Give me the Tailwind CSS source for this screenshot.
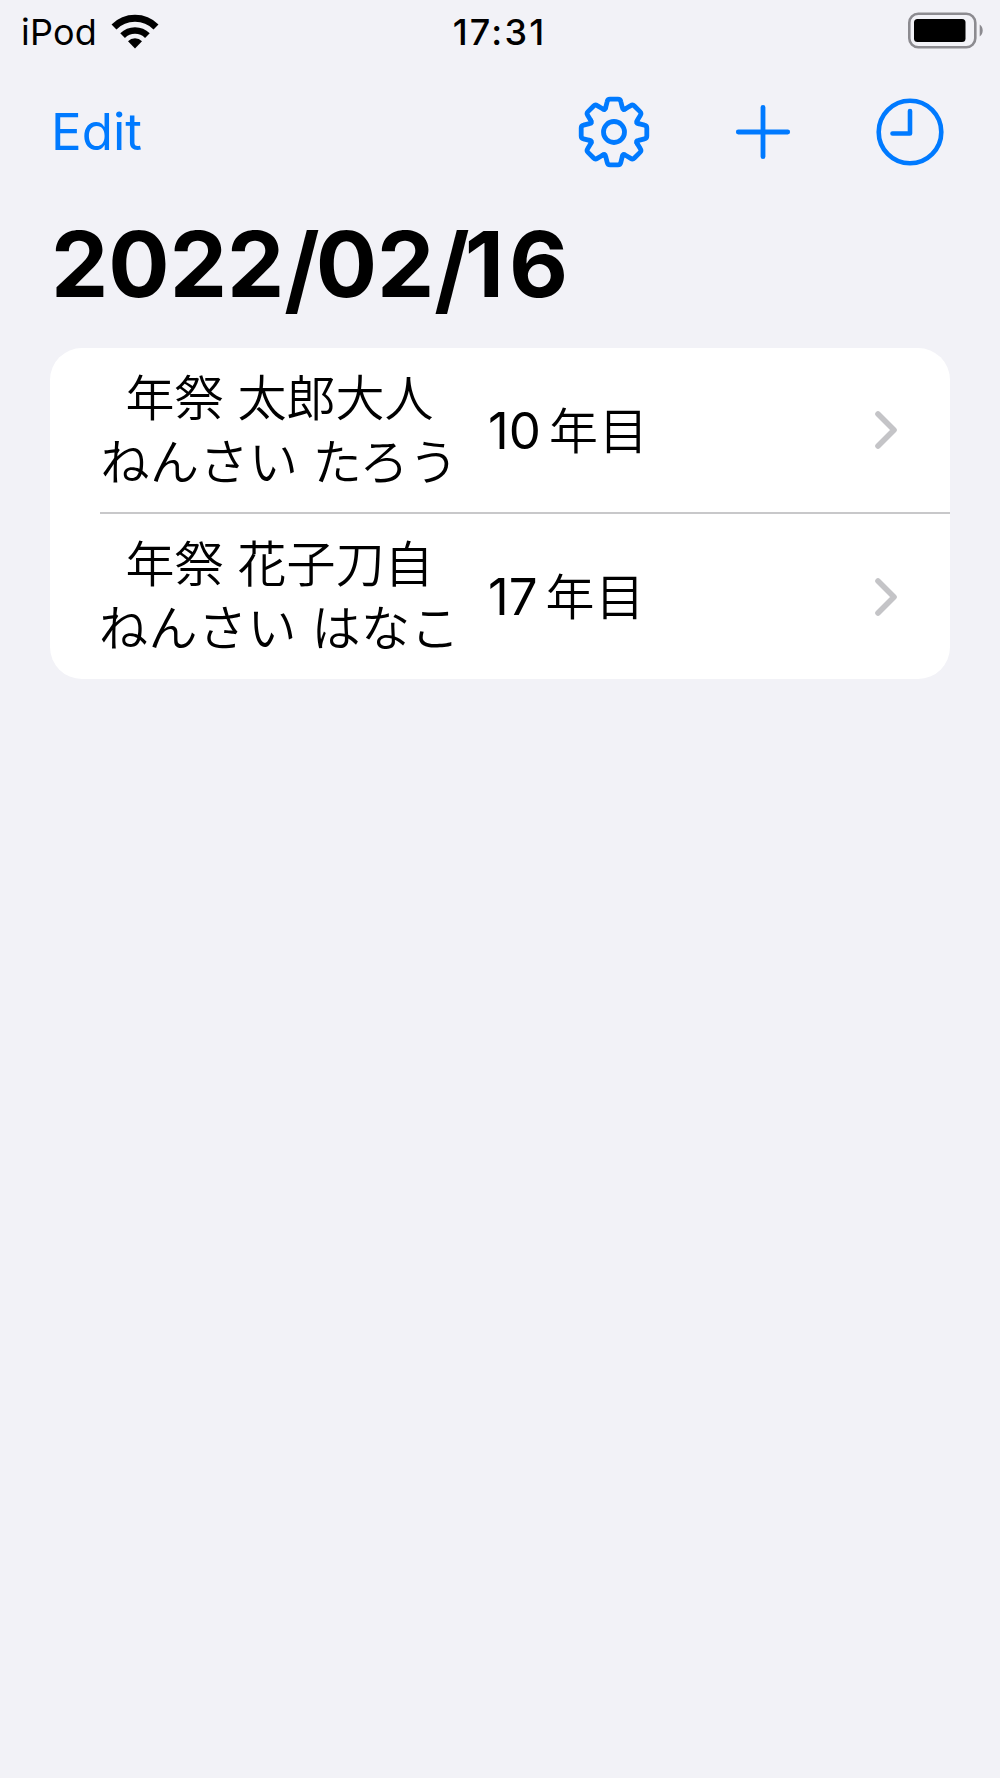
<!DOCTYPE html>
<html lang="ja">
<head>
    <meta charset="UTF-8">
    <meta name="viewport" content="width=device-width, initial-scale=1.0">
    <title>2022/02/16</title>
    <script src="https://cdn.jsdelivr.net/npm/@tailwindcss/browser@4"></script>
</head>
<body class="bg-[#f2f2f7] text-black min-h-screen font-['Inter','Noto_Sans_CJK_JP',sans-serif]">
    <!-- status bar -->
    <div class="grid grid-cols-3 items-center h-[64px] pl-[21px] pr-[17px]">
        <div class="flex items-center">
            <span class="w-[77px] text-[36px] leading-[64px] tracking-[0.2px] font-normal">iPod</span>
            <svg class="w-[48px] h-[36px] ml-[13px] mb-[2px]" viewBox="111 13 48 36" fill="none" stroke="#000">
                <path d="M114 27a29.7 29.7 0 0 1 42 0" stroke-width="7"/>
                <path d="M122.6 35.6a17.5 17.5 0 0 1 24.8 0" stroke-width="6.6"/>
                <path d="M128 41.2a10 10 0 0 1 14 0l-7 7.2z" fill="#000" stroke="none"/>
            </svg>
        </div>
        <div class="pr-[5px] text-center text-[36px] leading-[64px] tracking-[2.2px] font-medium">17:31</div>
        <svg class="w-[76px] h-[37px] justify-self-end mb-[4px]" viewBox="907 12 76 37" fill="none">
            <rect x="909.3" y="13.8" width="66" height="33.4" rx="9" stroke="#8c8b90" stroke-width="2.6"/>
            <rect x="914" y="19" width="51.5" height="23" rx="3.5" fill="#000"/>
            <path d="M979.7 24.5c4 2.5 4 9.5 0 12z" fill="#8c8b90"/>
        </svg>
    </div>

    <!-- toolbar -->
    <div class="flex items-center justify-between h-[136px] pl-[51px] pr-[55px] text-[#007aff]">
        <button class="text-[51px] leading-[60px] font-normal">Edit</button>
        <div class="flex items-center">
            <svg class="w-[72px] h-[72px]" viewBox="-36 -36 72 72" fill="none" stroke="currentColor" stroke-width="4.8" stroke-linecap="round" stroke-linejoin="round">
                <path id="tooth" d="M-8.3-24.5L-6.8-30.5Q-6.3-32.8-4-32.8H4Q6.3-32.8 6.8-30.5L8.3-24.5Q8.8-21.2 11.5-23.2"/>
                <use href="#tooth" transform="rotate(45)"/>
                <use href="#tooth" transform="rotate(90)"/>
                <use href="#tooth" transform="rotate(135)"/>
                <use href="#tooth" transform="rotate(180)"/>
                <use href="#tooth" transform="rotate(225)"/>
                <use href="#tooth" transform="rotate(270)"/>
                <use href="#tooth" transform="rotate(315)"/>
                <circle r="10.5"/>
            </svg>
            <svg class="w-[60px] h-[60px] ml-[83.5px]" viewBox="-30 -30 60 60" fill="none" stroke="currentColor" stroke-width="4.8" stroke-linecap="round">
                <path d="M-24.7 0H24.7M0-24.7V24.7"/>
            </svg>
            <svg class="w-[70px] h-[70px] ml-[82px]" viewBox="-35 -35 70 70" fill="none" stroke="currentColor" stroke-width="4.6" stroke-linecap="round" stroke-linejoin="round">
                <circle r="31.3"/>
                <path d="M0-21V1.5H-17.5"/>
            </svg>
        </div>
    </div>

    <h1 class="h-[148px] pl-[51px] text-[91px] leading-[128px] font-bold">2022<span class="inline-block origin-top scale-y-[1.06] tracking-[-4px]">/</span>02<span class="inline-block origin-top scale-y-[1.06] tracking-[-5px]">/</span><span class="tracking-[5px]">1</span>6</h1>

    <ul class="mx-[50px] bg-white rounded-[32px] overflow-hidden text-[49px]">
        <li class="flex items-center h-[166px] pl-[50px]">
            <div class="flex items-center flex-1 h-full pr-[53px] border-b-2 border-[#c8c8ca]">
                <div class="flex flex-col items-center w-[359px] pt-[2px] leading-[64px] font-[350] whitespace-nowrap">
                    <div>年祭 太郎大人</div>
                    <div class="tracking-[0.5px]">ねんさい たろう</div>
                </div>
                <div class="ml-[29px] pt-[3px] text-[51px] leading-[64px]">10<span class="ml-[8px] text-[49px] tracking-[1px] font-[350]">年目</span></div>
                <svg class="w-[22px] h-[40px] ml-auto" viewBox="0 0 22 40" fill="none" stroke="#c4c4c7" stroke-width="5.6" stroke-linecap="round" stroke-linejoin="round">
                    <path d="M3 4L19 20L3 36"/>
                </svg>
            </div>
        </li>
        <li class="flex items-center h-[165px] pl-[50px]">
            <div class="flex items-center flex-1 h-full pr-[53px]">
                <div class="flex flex-col items-center w-[359px] leading-[64px] font-[350] whitespace-nowrap">
                    <div>年祭 花子刀自</div>
                    <div class="tracking-[0.5px]">ねんさい はなこ</div>
                </div>
                <div class="ml-[29px] pt-[2px] text-[51px] leading-[64px]">17<span class="ml-[8px] text-[49px] tracking-[1px] font-[350]">年目</span></div>
                <svg class="w-[22px] h-[40px] ml-auto" viewBox="0 0 22 40" fill="none" stroke="#c4c4c7" stroke-width="5.6" stroke-linecap="round" stroke-linejoin="round">
                    <path d="M3 4L19 20L3 36"/>
                </svg>
            </div>
        </li>
    </ul>
</body>
</html>
